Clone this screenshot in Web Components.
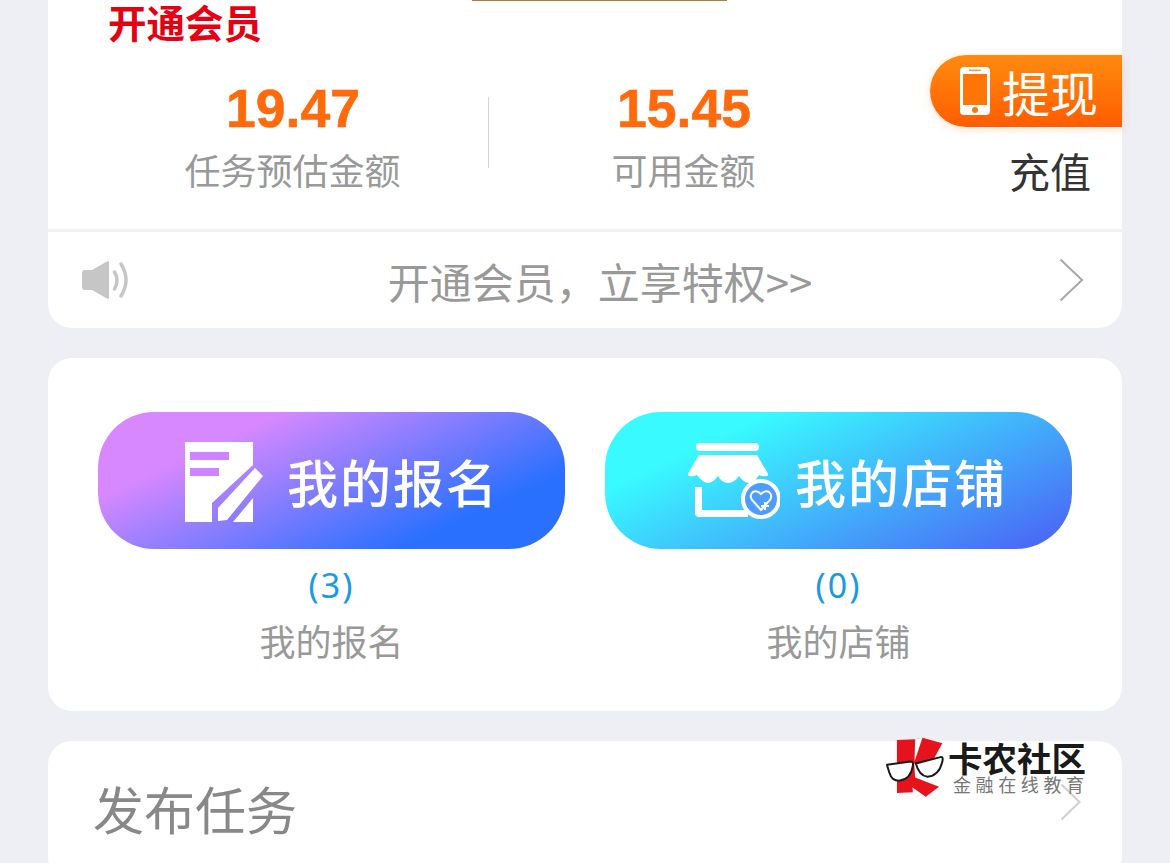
<!DOCTYPE html>
<html lang="zh">
<head>
<meta charset="utf-8">
<title>我的</title>
<style>
  html, body { margin: 0; height: 863px; overflow: hidden; background: #eeeef5; }
  body {
    font-family: "Noto Sans CJK SC", "Liberation Sans", sans-serif;
    position: relative;
  }
</style>
</head>
<body>

<template id="page-tpl">
  <style>
    :host { display: flex; flex-direction: column; gap: 30px; padding: 0 48px; }
  </style>
  <slot></slot>
</template>

<template id="card-tpl">
  <style>
    :host { display: block; position: relative; background: #fff; border-radius: 24px; }
    :host([flat-top]) { border-radius: 0 0 24px 24px; }
  </style>
  <slot></slot>
</template>

<template id="header-tpl">
  <style>
    :host { display: block; position: relative; height: 80px; padding-left: 60px; box-sizing: border-box; }
    .title { font-size: 38.500px; line-height: 43px; font-weight: 700; color: #e60012; }
    .sliver { position: absolute; left: 424px; top: 0; width: 255px; height: 1px; background: #b5793a; }
  </style>
  <div class="title"><slot></slot></div>
  <div class="sliver"></div>
</template>

<template id="stat-tpl">
  <style>
    :host { display: flex; flex-direction: column; align-items: center; }
    .num {
      font-family: "Liberation Sans", sans-serif;
      font-size: 53.500px; line-height: 56px; font-weight: 700; color: #ff6a0c;
      -webkit-text-stroke: .6px #ff6a0c; margin-top: 1px;
    }
    .label { margin: 9px 1px 0 0; font-size: 36px; line-height: 46px; color: #999; }
  </style>
  <div class="num"><slot name="num"></slot></div>
  <div class="label"><slot name="label"></slot></div>
</template>

<template id="withdraw-tpl">
  <style>
    :host {
      position: absolute; right: 0; top: 55px;
      display: flex; align-items: center; gap: 12px;
      width: 192px; height: 72px; box-sizing: border-box; padding-left: 30px;
      border-radius: 36px 0 0 36px;
      background: linear-gradient(180deg, #ff8b10, #ff5c00);
      box-shadow: 0 2px 10px rgba(255, 120, 20, .22);
      color: #fff; font-size: 48px; line-height: 68px;
    }
    svg { display: block; flex: none; }
  </style>
  <svg width="30" height="48" viewBox="0 0 30 48">
    <rect width="30" height="48" rx="4" fill="#fff"/>
    <rect x="3" y="7" width="24" height="31" fill="#ff7606"/>
    <rect x="9" y="2.500" width="12" height="1.500" fill="#ff9a40"/>
    <circle cx="15" cy="43" r="3" fill="#ff7606"/>
  </svg>
  <slot></slot>
</template>

<template id="notice-tpl">
  <style>
    :host {
      display: flex; align-items: center; height: 99px; box-sizing: border-box;
      border-top: 3px solid #f1f1f4; padding: 0 38px 0 33px; color: #999; font-size: 42px;
    }
    .text { flex: 1; text-align: center; padding-left: 12px; }
    svg { display: block; flex: none; }
  </style>
  <svg width="48" height="42" viewBox="0 0 48 42">
    <path d="M4 11h7L26 2.500q2-1 2 1v35q0 2-2 1L11 31H4q-3 0-3-3V14q0-3 3-3z" fill="#c6c6c6"/>
    <path d="M33.500 13q5 8 0 17M40 5q10 16 0 32" fill="none" stroke="#c6c6c6" stroke-width="3.500" stroke-linecap="round"/>
  </svg>
  <div class="text"><slot></slot></div>
  <svg width="25" height="44" viewBox="0 0 25 44">
    <path d="M1.500 1.500L23 22 1.500 42.500" fill="none" stroke="#a8a8a8" stroke-width="2"/>
  </svg>
</template>

<template id="action-tpl">
  <style>
    :host { display: flex; flex-direction: column; align-items: center; }
    .btn {
      width: 467px; height: 137px; border-radius: 56px; box-sizing: border-box;
      display: flex; align-items: center; color: #fff;
      font-size: 51px; font-weight: 500; letter-spacing: 2px;
      background: var(--grad);
    }
    .icon { flex: none; display: flex; }
    .count { margin-top: 16px; font-size: 34px; letter-spacing: 2px; line-height: 40px; color: #1a9be0; font-family: "Noto Sans", sans-serif; }
    .label { margin-top: 12px; font-size: 36px; line-height: 46px; color: #999; }
  </style>
  <div class="btn" part="btn">
    <div class="icon"><slot name="icon"></slot></div>
    <slot name="title"></slot>
  </div>
  <div class="count"><slot name="count"></slot></div>
  <div class="label"><slot name="label"></slot></div>
</template>

<template id="row-tpl">
  <style>
    :host {
      display: flex; align-items: center; justify-content: space-between;
      height: 140px; box-sizing: border-box; padding: 0 41px 6px 45px;
      font-size: 51px; color: #888;
    }
    svg { display: block; flex: none; margin-bottom: 12px; }
  </style>
  <slot></slot>
  <svg width="21" height="38" viewBox="0 0 21 38">
    <path d="M1.500 1.500L19.500 19 1.500 36.500" fill="none" stroke="#cfcfcf" stroke-width="2"/>
  </svg>
</template>

<template id="logo-tpl">
  <style>
    :host {
      position: absolute; left: 884px; top: 736px;
      display: flex; align-items: flex-start; gap: 2px;
    }
    svg { display: block; flex: none; }
    .name { font-size: 34.500px; line-height: 40px; font-weight: 700; color: #1a1a1a; margin-top: 1px; white-space: nowrap; }
    .sub { font-size: 18px; line-height: 22px; letter-spacing: 4.600px; color: #777; margin: -4px 0 0 5px; white-space: nowrap; }
  </style>
  <svg width="62" height="63" viewBox="40 35 185 190">
    <path d="M78 47l55-2 22-5 60 17-40 73-45-12 3 42 72 28-40 30-40-28 1 15-48 2z" fill="#e4131c"/>
    <path d="M133 45l22-5-24 72z" fill="#fff"/>
    <path d="M48 122l72-10q8 0 6 13-6 40-41 45-23 0-30-25z" fill="#fff" stroke="#1a1a1a" stroke-width="6" stroke-linejoin="round"/>
    <path d="M135 118l77-20q6 0 3 14-10 43-45 46-25-3-35-40z" fill="#fff" stroke="#1a1a1a" stroke-width="6" stroke-linejoin="round"/>
  </svg>
  <div>
    <div class="name"><slot name="name"></slot></div>
    <div class="sub"><slot name="sub"></slot></div>
  </div>
</template>

<my-page>
  <my-card flat-top>
    <card-header>开通会员</card-header>
    <stat-row>
      <stat-item>
        <span slot="num">19.47</span>
        <span slot="label">任务预估金额</span>
      </stat-item>
      <stat-item>
        <span slot="num">15.45</span>
        <span slot="label">可用金额</span>
      </stat-item>
      <span slot="side">充值</span>
    </stat-row>
    <withdraw-btn>提现</withdraw-btn>
    <notice-bar>开通会员，立享特权&gt;&gt;</notice-bar>
  </my-card>

  <my-card>
    <action-grid>
      <action-item style="--grad: linear-gradient(155deg, #d788ff 24%, #2a70ff 78%)">
        <svg slot="icon" style="margin:2px 22px 0 87px;display:block" width="80" height="80" viewBox="0 0 80 80">
          <path d="M0 0h68v23L27 61v19H0z" fill="#fff"/>
          <path d="M5 10h39v8H5zM5 26h29v8H5z" fill="#cd85ff"/>
          <path d="M70 26l8 8-36 44-9 1V66zM68 56v24H48z" fill="#fff"/>
        </svg>
        <span slot="title">我的报名</span>
        <span slot="count">(3)</span>
        <span slot="label">我的报名</span>
      </action-item>
      <action-item style="--grad: linear-gradient(155deg, #38faff 22%, #4a68f6 95%)">
        <svg slot="icon" style="margin:0 15px 0 83px;display:block" width="92" height="76" viewBox="0 0 92 76">
          <rect x="8" y="0" width="63" height="8" rx="4" fill="#fff"/>
          <path d="M11 12h58l10 17q2 3 0 4-4 1-8-1-5 8-10 8t-10-7q-5 7-11 7t-10-7q-5 7-10 7T9 32q-4 2-8 1-2-1 0-4z" fill="#fff"/>
          <path d="M7 44h7v23h46v7H11q-4 0-4-4z" fill="#fff"/>
          <circle cx="73" cy="56" r="18" fill="#4f9cff" stroke="#fff" stroke-width="4"/>
          <path d="M73 67l-9-10q-3-5 1-8 4-2 8 2 4-4 8-2 4 3 1 8z" fill="none" stroke="#fff" stroke-width="2"/>
          <path d="M77 59v8M73 63h8" stroke="#fff" stroke-width="2"/>
        </svg>
        <span slot="title">我的店铺</span>
        <span slot="count">(0)</span>
        <span slot="label">我的店铺</span>
      </action-item>
    </action-grid>
  </my-card>

  <my-card>
    <task-row>发布任务</task-row>
  </my-card>
</my-page>

<brand-logo>
  <span slot="name">卡农社区</span>
  <span slot="sub">金融在线教育</span>
</brand-logo>

<script>
// plain components: each one clones its template into an open shadow root
function fromTemplate(tag, id) {
  customElements.define(tag, class extends HTMLElement {
    constructor() {
      super();
      this.attachShadow({ mode: "open" });
      this.shadowRoot.appendChild(document.getElementById(id).content.cloneNode(true));
    }
  });
}

fromTemplate("my-page", "page-tpl");
fromTemplate("my-card", "card-tpl");
fromTemplate("card-header", "header-tpl");
fromTemplate("stat-item", "stat-tpl");
fromTemplate("withdraw-btn", "withdraw-tpl");
fromTemplate("notice-bar", "notice-tpl");
fromTemplate("action-item", "action-tpl");
fromTemplate("task-row", "row-tpl");
fromTemplate("brand-logo", "logo-tpl");

// stats row sets its markup in the class
class StatRow extends HTMLElement {
  constructor() {
    super();
    this.attachShadow({ mode: "open" });
    this.shadowRoot.innerHTML = `
      <style>
        :host { display: grid; grid-template-columns: 390px 392px 1fr; height: 149px; padding-left: 50px; }
        .col { display: flex; justify-content: center; }
        .col + .col { position: relative; }
        .rule { position: absolute; left: 0; top: 17px; width: 1px; height: 71px; background: #d5d5d5; }
        .side { display: flex; justify-content: flex-end; padding: 62px 31px 0 0; font-size: 41px; line-height: 56px; color: #333; }
      </style>
      <div class="col"><slot name="a"></slot></div>
      <div class="col"><div class="rule"></div><slot name="b"></slot></div>
      <div class="side"><slot name="side"></slot></div>`;
  }
  connectedCallback() {
    const items = this.querySelectorAll("stat-item");
    items[0].slot = "a";
    items[1].slot = "b";
  }
}
customElements.define("stat-row", StatRow);

class ActionGrid extends HTMLElement {
  constructor() {
    super();
    this.attachShadow({ mode: "open" });
    this.shadowRoot.innerHTML = `
      <style>
        :host { display: grid; grid-template-columns: 467px 467px; gap: 40px; height: 353px; box-sizing: border-box; padding: 54px 50px 0; }
      </style>
      <slot></slot>`;
  }
}
customElements.define("action-grid", ActionGrid);
</script>
</body>
</html>
